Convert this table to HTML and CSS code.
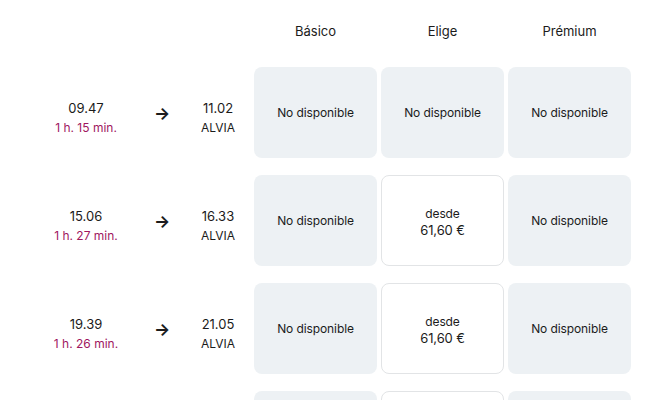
FILE: index.html
```html
<!DOCTYPE html>
<html lang="es">
<head>
<meta charset="utf-8">
<link rel="stylesheet" href="styles.css">
</head>
<body>
<div class="table">
  <div class="row head">
    <div class="info"></div>
    <div class="col-title">Básico</div>
    <div class="col-title">Elige</div>
    <div class="col-title">Prémium</div>
  </div>

  <div class="row">
    <div class="info">
      <div class="time"><span class="hour">09.47</span><span class="dur">1 h. 15 min.</span></div>
      <div class="arrow">→</div>
      <div class="time"><span class="hour">11.02</span><span class="train">ALVIA</span></div>
    </div>
    <div class="card na">No disponible</div>
    <div class="card na">No disponible</div>
    <div class="card na">No disponible</div>
  </div>

  <div class="row">
    <div class="info">
      <div class="time"><span class="hour">15.06</span><span class="dur">1 h. 27 min.</span></div>
      <div class="arrow">→</div>
      <div class="time"><span class="hour">16.33</span><span class="train">ALVIA</span></div>
    </div>
    <div class="card na">No disponible</div>
    <div class="card price"><span>desde</span><span class="amount">61,60 €</span></div>
    <div class="card na">No disponible</div>
  </div>

  <div class="row">
    <div class="info">
      <div class="time"><span class="hour">19.39</span><span class="dur">1 h. 26 min.</span></div>
      <div class="arrow">→</div>
      <div class="time"><span class="hour">21.05</span><span class="train">ALVIA</span></div>
    </div>
    <div class="card na">No disponible</div>
    <div class="card price"><span>desde</span><span class="amount">61,60 €</span></div>
    <div class="card na">No disponible</div>
  </div>

  <div class="row">
    <div class="info"></div>
    <div class="card na"></div>
    <div class="card price"></div>
    <div class="card na"></div>
  </div>
</div>
</body>
</html>
```

FILE: styles.css
```css
html, body {
  margin: 0;
  padding: 0;
  background: #ffffff;
}
body {
  font-family: Inter, "Liberation Sans", sans-serif;
  color: #1b1b1b;
  overflow: hidden;
  height: 400px;
}
.table {
  display: flex;
  flex-direction: column;
  gap: 17px;
}
.row {
  display: grid;
  grid-template-columns: 250px 123px 123px 123px;
  column-gap: 4px;
}
.head {
  padding-top: 22px;
  margin-bottom: 10px;
}
.col-title {
  text-align: center;
  font-size: 13px;
  line-height: 18px;
}
.info {
  display: grid;
  grid-template-columns: 92px 60px 52px;
  padding-left: 40px;
  align-items: center;
}
.time {
  display: flex;
  flex-direction: column;
  align-items: center;
  padding-top: 10px;
  font-size: 12.5px;
  line-height: 19px;
}
.hour {
  font-size: 13px;
}
.dur {
  color: #a0175f;
  font-size: 12px;
}
.train {
  font-size: 12px;
}
.arrow {
  text-align: center;
  font-size: 17px;
  font-weight: 700;
  line-height: 20px;
}
.card {
  height: 91px;
  box-sizing: border-box;
  border-radius: 8px;
  display: flex;
  flex-direction: column;
  align-items: center;
  justify-content: center;
  font-size: 12px;
  line-height: 17px;
  letter-spacing: -0.1px;
}
.na {
  background: #edf1f4;
}
.price {
  background: #ffffff;
  border: 1px solid #e2e4e6;
  padding-top: 2px;
}
.amount {
  font-size: 13px;
}
```
